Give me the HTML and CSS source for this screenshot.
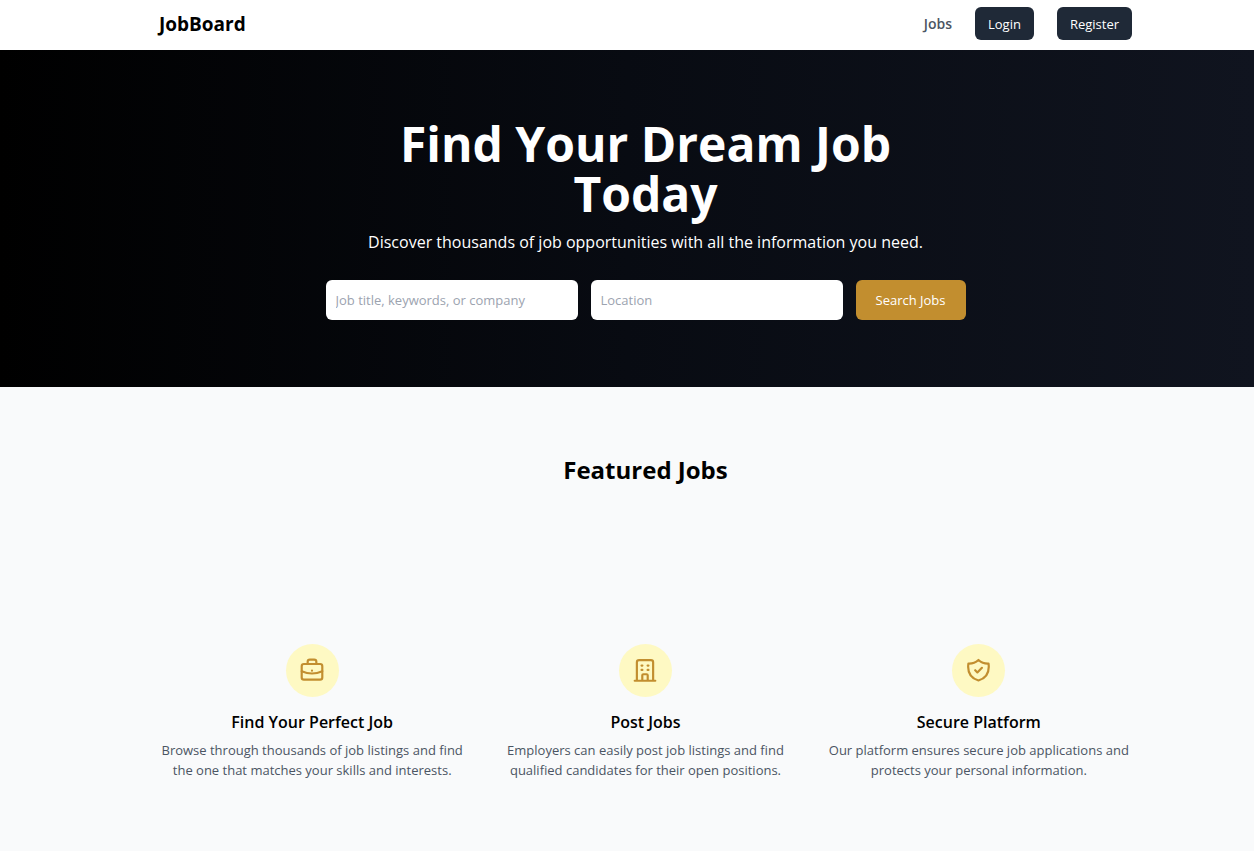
FILE: index.html
```html
<!DOCTYPE html>
<html lang="en">
<head>
<meta charset="utf-8">
<meta name="viewport" content="width=device-width, initial-scale=1">
<title>JobBoard</title>
<link rel="stylesheet" href="styles.css">
</head>
<body>
<header class="site-header">
  <div class="container header-row">
    <a class="brand" href="#">JobBoard</a>
    <nav class="nav">
      <a class="nav-link" href="#">Jobs</a>
      <button class="nav-button" type="button">Login</button>
      <button class="nav-button" type="button">Register</button>
    </nav>
  </div>
</header>
<main>
  <section class="hero">
    <div class="hero-inner">
      <h1 class="hero-title">Find Your Dream Job<br>Today</h1>
      <p class="hero-text">Discover thousands of job opportunities with all the information you need.</p>
      <form class="search">
        <input class="search-input" type="text" aria-label="Job title, keywords, or company" placeholder="Job title, keywords, or company">
        <input class="search-input" type="text" aria-label="Location" placeholder="Location">
        <button class="search-button" type="submit">Search Jobs</button>
      </form>
    </div>
  </section>
  <section class="featured">
    <h2 class="featured-title">Featured Jobs</h2>
  </section>
  <section class="benefits">
    <div class="container benefits-grid">
      <article class="benefit">
        <div class="benefit-icon">
          <svg class="icon" viewBox="0 0 24 24" aria-hidden="true"><rect x="2.500" y="5.500" width="19" height="14.500" rx="2"/><path d="M8 5.500V3.500a2 2 0 0 1 2-2h4a2 2 0 0 1 2 2v2M2.500 12.200q9.500 4.200 19 0M12 11.700v.01"/></svg>
        </div>
        <h3 class="benefit-title">Find Your Perfect Job</h3>
        <p class="benefit-text">Browse through thousands of job listings and find the one that matches your skills and interests.</p>
      </article>
      <article class="benefit">
        <div class="benefit-icon">
          <svg class="icon" viewBox="0 0 24 24" aria-hidden="true"><path d="M4.500 21V4a2 2 0 0 1 2-2h11a2 2 0 0 1 2 2v17M2.500 21h19M9.500 21v-5a1 1 0 0 1 1-1h3a1 1 0 0 1 1 1v5M8.800 7h.8M14.400 7h.8M8.800 11h.8M14.400 11h.8"/></svg>
        </div>
        <h3 class="benefit-title">Post Jobs</h3>
        <p class="benefit-text">Employers can easily post job listings and find qualified candidates for their open positions.</p>
      </article>
      <article class="benefit">
        <div class="benefit-icon">
          <svg class="icon" viewBox="0 0 24 24" aria-hidden="true"><path d="M11.500 1.800a13 13 0 0 1-9.300 3.300c-1 7.500 2 13.500 9.300 15.700 7.300-2.200 10.300-8.200 9.300-15.700a13 13 0 0 1-9.300-3.300zM8.500 11.300l2 2 4.200-4.200"/></svg>
        </div>
        <h3 class="benefit-title">Secure Platform</h3>
        <p class="benefit-text">Our platform ensures secure job applications and protects your personal information.</p>
      </article>
    </div>
  </section>
</main>
</body>
</html>
```
FILE: styles.css
```css
* { box-sizing: border-box; }

body {
  margin: 0;
  min-height: 100vh;
  background: #f9fafb;
  color: #000;
  font-family: "Open Sans", "Noto Sans", sans-serif;
  font-size: 13px;
  line-height: 20px;
}

h1, h2, h3, p { margin: 0; }
button, input { font: inherit; border: 0; border-radius: 6px; }
button { cursor: pointer; }
a { text-decoration: none; }

.site-header, .hero, .featured, .benefits { padding-left: 37px; }
.container { max-width: 973px; margin: 0 auto; }

.site-header { background: #fff; }
.header-row {
  display: flex;
  align-items: center;
  justify-content: space-between;
  min-height: 50px;
  padding-bottom: 3px;
}
.brand { color: #000; font-size: 19px; font-weight: 700; }
.nav { display: flex; align-items: center; gap: 23px; }
.nav-link { color: #4b5563; font-size: 14px; font-weight: 600; }
.nav-button {
  padding: 7px 13px 6px;
  background: #1f2937;
  color: #fff;
  font-weight: 500;
}

.hero {
  padding-top: 67px;
  padding-bottom: 67px;
  background: linear-gradient(to right, #000, #080b12 50%, #10141f);
  color: #fff;
  text-align: center;
}
.hero-inner { max-width: 640px; margin: 0 auto; }
.hero-title { font-size: 48px; font-weight: 700; line-height: 50px; padding: 2px 0 11px; }
.hero-text { font-size: 16px; line-height: 24px; margin-bottom: 26px; }
.search { display: flex; gap: 13px; }
.search-input {
  flex: 1;
  min-width: 0;
  height: 40px;
  padding: 0 10px;
  background: #fff;
}
.search-input::placeholder { color: #9ca3af; opacity: 1; }
.search-button {
  padding: 0 20px;
  background: #c28e2f;
  color: #fff;
  font-weight: 500;
}

.featured { padding-top: 67px; padding-bottom: 67px; text-align: center; }
.featured-title { font-size: 24px; font-weight: 700; line-height: 32px; }

.benefits { padding-top: 91px; padding-bottom: 67px; }
.benefits-grid { display: grid; grid-template-columns: repeat(3, 1fr); gap: 27px; }
.benefit { text-align: center; }
.benefit-icon {
  display: grid;
  place-items: center;
  width: 53px;
  height: 53px;
  margin: 0 auto 13px;
  border-radius: 50%;
  background: #fef9c3;
}
.icon {
  width: 26px;
  height: 26px;
  fill: none;
  stroke: #c28e2f;
  stroke-width: 2;
  stroke-linecap: round;
  stroke-linejoin: round;
}
.benefit-title { font-size: 16px; font-weight: 600; line-height: 24px; margin-bottom: 6px; }
.benefit-text { color: #4b5563; }
```
